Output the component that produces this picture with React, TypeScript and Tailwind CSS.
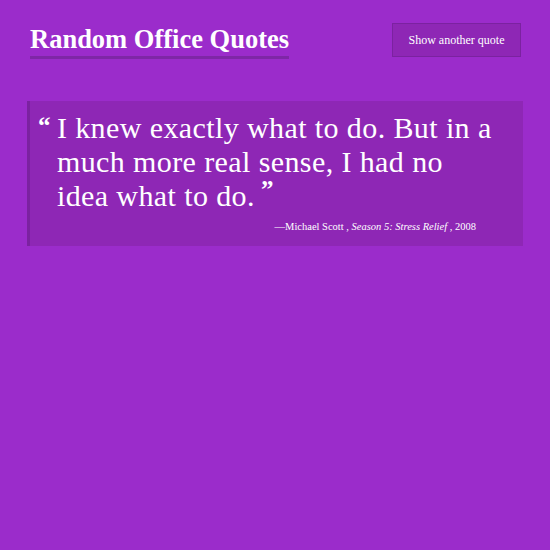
export default function App() {
  return (
    <div
      className="min-h-screen bg-[#9b2ccb] px-[27px] pt-[23px] text-white"
      style={{ fontFamily: '"Liberation Serif", serif' }}
    >
      <header className="flex items-start justify-between pl-[3px]">
        <h1 className="border-b-[3px] border-[#7e27a6] pb-[1px] text-[26.5px] font-bold leading-[32px]">
          Random Office Quotes
        </h1>
        <button className="mr-[2px] h-[34px] w-[129px] border border-[#7b22a0] bg-[#8e27b5] text-[12px]">
          Show another quote
        </button>
      </header>

      <blockquote className="mt-[42px] border-l-[3px] border-[#7b22a0] bg-[#8e27b5] pb-[11px] pl-[8px] pr-[20px] pt-[10px]">
        <p className="flex text-[30px] leading-[34px] tracking-[0.4px]">
          <span className="mr-[6px] text-[25px] font-bold leading-[30px]">“</span>
          <span className="max-w-[440px]">
            I knew exactly what to do. But in a much more real sense, I had no idea what to do.
            <span className="ml-[6px] inline-block align-top text-[25px] font-bold leading-[22px]">”</span>
          </span>
        </p>
        <footer className="mt-[6px] pr-[27px] text-right text-[10.5px]">
          —Michael Scott , <cite className="italic">Season 5: Stress Relief</cite> , 2008
        </footer>
      </blockquote>
    </div>
  );
}
